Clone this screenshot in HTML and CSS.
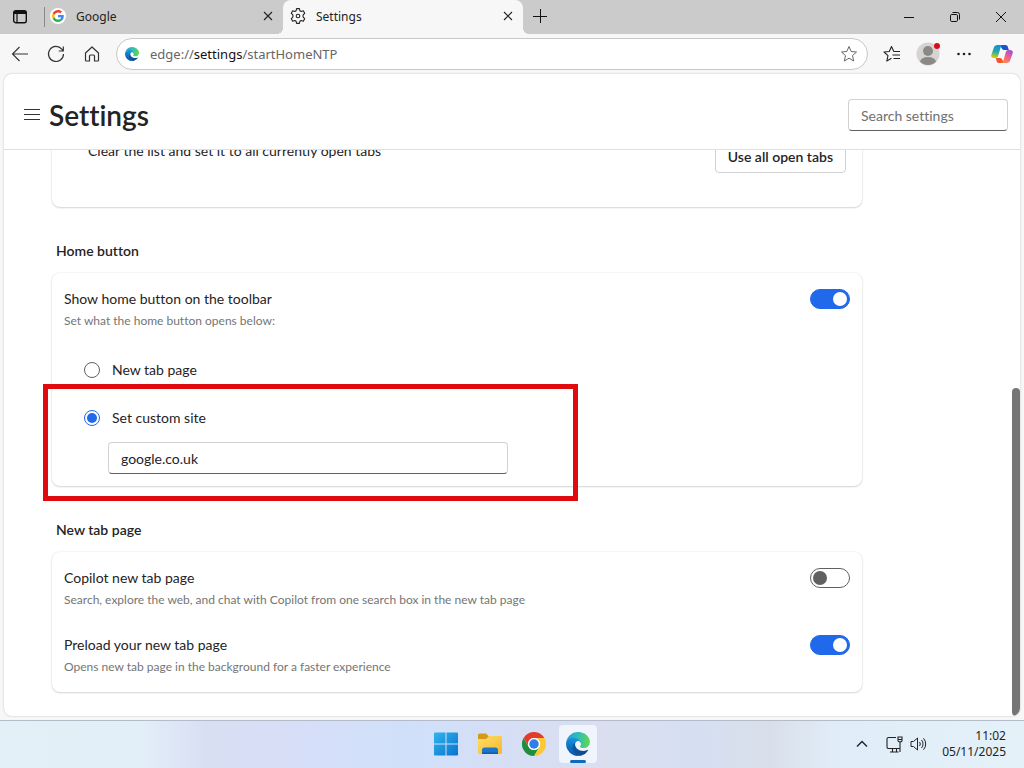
FILE: index.html
```html
<!DOCTYPE html>
<html lang="en">
  <head>
    <meta charset="UTF-8" />
    <meta name="viewport" content="width=device-width, initial-scale=1.0" />
    <title>Settings</title>
    <link rel="stylesheet" href="styles.css" />
  </head>
  <body>
    <svg class="defs" width="0" height="0" aria-hidden="true">
      <defs>
        <linearGradient id="edgeA" x1="0.2" y1="0" x2="1" y2="0.3">
          <stop offset="0" stop-color="#0c59a4" />
          <stop offset="1" stop-color="#114a8b" />
        </linearGradient>
        <linearGradient id="edgeB" x1="0.6" y1="0" x2="0.3" y2="1">
          <stop offset="0" stop-color="#1b9de2" />
          <stop offset="0.5" stop-color="#0f78c8" />
          <stop offset="1" stop-color="#0b559e" />
        </linearGradient>
        <linearGradient id="edgeC" x1="0" y1="0.4" x2="1" y2="0.5">
          <stop offset="0" stop-color="#1f9fd8" />
          <stop offset="0.5" stop-color="#30bfb4" />
          <stop offset="1" stop-color="#62d84e" />
        </linearGradient>
        <linearGradient id="winBlue" x1="0" y1="0" x2="1" y2="1">
          <stop offset="0" stop-color="#2fb5ee" />
          <stop offset="1" stop-color="#0873cd" />
        </linearGradient>
        <linearGradient id="folderFront" x1="0" y1="0" x2="1" y2="1">
          <stop offset="0" stop-color="#ffdc6b" />
          <stop offset="1" stop-color="#f5b92b" />
        </linearGradient>
        <linearGradient id="copilotA" x1="0.5" y1="0" x2="0.3" y2="1">
          <stop offset="0" stop-color="#0c8fe0" />
          <stop offset="0.5" stop-color="#26a8a8" />
          <stop offset="0.8" stop-color="#8cc63f" />
          <stop offset="1" stop-color="#f4c20d" />
        </linearGradient>
        <linearGradient id="copilotB" x1="0.8" y1="0" x2="0.3" y2="1">
          <stop offset="0" stop-color="#a04be0" />
          <stop offset="0.5" stop-color="#ee5d92" />
          <stop offset="1" stop-color="#fb8a4a" />
        </linearGradient>
      </defs>
      <symbol id="edge" viewBox="4 4 257 257">
        <path fill="url(#edgeA)" d="M235.68 195.46a93.73 93.73 0 0 1-10.54 4.71 101.87 101.87 0 0 1-35.9 6.46c-47.32 0-88.54-32.55-88.54-74.32A31.48 31.48 0 0 1 117.13 105c-42.8 1.8-53.8 46.4-53.8 72.53 0 73.88 68.09 81.37 82.76 81.37 7.91 0 19.84-2.3 27-4.56l1.31-.44a128.34 128.34 0 0 0 66.6-52.8 4 4 0 0 0-5.32-5.64z" />
        <path fill="url(#edgeB)" d="M110.34 246.34A79.2 79.2 0 0 1 87.6 225a80.72 80.72 0 0 1 29.53-120c3.12-1.47 8.45-4.13 15.54-4a32.35 32.35 0 0 1 25.69 13 31.88 31.88 0 0 1 6.36 18.66c0-.21 24.46-79.6-80-79.6-43.9 0-80 41.66-80 78.21a130.15 130.15 0 0 0 12.11 56 128 128 0 0 0 156.38 67.11 75.55 75.55 0 0 1-62.78-8z" />
        <path fill="url(#edgeC)" d="M156.94 153.78c-.81 1.05-3.3 2.5-3.3 5.66 0 2.61 1.7 5.12 4.72 7.23 14.38 10 41.49 8.68 41.56 8.68a59.56 59.56 0 0 0 30.27-8.35A61.38 61.38 0 0 0 260.63 114.2c.26-22.41-8-37.31-11.34-43.91C228.1 28.79 182.3 4.86 132.61 4.86a128 128 0 0 0-128 126.2c.48-36.54 36.8-66.05 80-66.05 3.5 0 23.46.34 42 10.07 16.34 8.58 24.9 18.94 30.85 29.21 6.18 10.67 7.28 24.15 7.28 29.52s-2.74 13.33-7.8 19.97z" />
      </symbol>
    </svg>

    <div class="tab-strip">
      <button class="tab-actions" aria-label="Tab actions">
        <svg width="16" height="16" viewBox="0 0 16 16" fill="none" stroke="#111" stroke-width="1.4">
          <rect x="1.700" y="1.700" width="12.600" height="12" rx="2" />
          <path d="M2 3.500h12" stroke-width="3" />
          <path d="M5 5v9" stroke-width="1.200" />
        </svg>
      </button>
      <div class="tab tab-first">
        <span class="favicon">
          <svg width="12" height="12" viewBox="0 0 48 48">
            <path fill="#ea4335" d="M24 9.5c3.54 0 6.71 1.22 9.21 3.6l6.85-6.85C35.9 2.38 30.47 0 24 0 14.62 0 6.51 5.38 2.56 13.22l7.98 6.19C12.43 13.72 17.74 9.5 24 9.5z" />
            <path fill="#4285f4" d="M46.98 24.55c0-1.57-.15-3.09-.38-4.55H24v9.02h12.94c-.58 2.96-2.26 5.48-4.78 7.18l7.73 6c4.51-4.18 7.09-10.36 7.09-17.65z" />
            <path fill="#fbbc05" d="M10.53 28.59c-.48-1.45-.76-2.99-.76-4.59s.27-3.14.76-4.59l-7.98-6.19C.92 16.46 0 20.12 0 24c0 3.88.92 7.54 2.56 10.78l7.97-6.19z" />
            <path fill="#34a853" d="M24 48c6.48 0 11.93-2.13 15.89-5.81l-7.73-6c-2.15 1.45-4.92 2.3-8.16 2.3-6.26 0-11.57-4.22-13.47-9.91l-7.98 6.19C6.51 42.62 14.62 48 24 48z" />
          </svg>
        </span>
        <span class="tab-title">Google</span>
        <button class="tab-close" aria-label="Close tab">
          <svg width="10" height="10" viewBox="0 0 10 10" stroke="#222" stroke-width="1.1"><path d="M1 1l8 8M9 1l-8 8" /></svg>
        </button>
      </div>
      <div class="tab tab-active">
        <svg class="gear" width="16" height="16" viewBox="0 0 16 16" fill="none" stroke="#222" stroke-width="1.100" stroke-linejoin="round">
          <path d="M6.600.600h2.800l.5 2.100 1.300.8 2.100-.7 1.400 2.500L13.100 6.900v2.200l1.600 1.600-1.400 2.500-2.100-.7-1.300.8-.5 2.100H6.600l-.5-2.100-1.300-.8-2.100.7-1.400-2.500L2.900 9.100V6.900L1.300 5.300l1.400-2.500 2.100.7 1.300-.8z" />
          <circle cx="8" cy="8" r="1.800" />
        </svg>
        <span class="tab-title">Settings</span>
        <button class="tab-close" aria-label="Close tab">
          <svg width="10" height="10" viewBox="0 0 10 10" stroke="#222" stroke-width="1.1"><path d="M1 1l8 8M9 1l-8 8" /></svg>
        </button>
      </div>
      <button class="new-tab" aria-label="New tab">
        <svg width="14" height="14" viewBox="0 0 14 14" stroke="#111"><path d="M0 7.500h14M7.500 0v14" /></svg>
      </button>
      <div class="window-controls">
        <button aria-label="Minimise">
          <svg width="10" height="10" viewBox="0 0 10 10" stroke="#111"><path d="M0 5.500h10" /></svg>
        </button>
        <button aria-label="Restore">
          <svg width="10" height="10" viewBox="0 0 10 10" fill="none" stroke="#111">
            <rect x="0.500" y="2.500" width="7" height="7" rx="1.300" />
            <path d="M2.500.5H7.500a2 2 0 0 1 2 2V7.500" />
          </svg>
        </button>
        <button aria-label="Close">
          <svg width="10" height="10" viewBox="0 0 10 10" stroke="#111"><path d="M0 0l10 10M10 0L0 10" /></svg>
        </button>
      </div>
    </div>

    <div class="toolbar">
      <button class="tool" aria-label="Back">
        <svg width="18" height="16" viewBox="0 0 18 16" fill="none" stroke="#333" stroke-width="1.100"><path d="M17 8H1.500M8.500 1L1.500 8l7 7" /></svg>
      </button>
      <button class="tool" aria-label="Refresh">
        <svg width="18" height="18" viewBox="0 0 18 18" fill="none" stroke="#333" stroke-width="1.200"><path d="M16.500 9A7.500 7.500 0 1 1 14.800 4.200L16 5.800M16.300 1.500V6h-4.500" /></svg>
      </button>
      <button class="tool" aria-label="Home">
        <svg width="16" height="16" viewBox="0 0 16 16" fill="none" stroke="#333" stroke-width="1.200" stroke-linejoin="round"><path d="M1.500 7L8 1l6.500 6v7.200a.8.8 0 0 1-.8.800H10.500V10a1 1 0 0 0-1-1h-3a1 1 0 0 0-1 1v5H2.300a.8.8 0 0 1-.8-.8z" /></svg>
      </button>
      <div class="address-bar">
        <svg width="14" height="14"><use href="#edge" /></svg>
        <span class="url">edge://<b>settings</b>/startHomeNTP</span>
        <button aria-label="Add this page to favourites">
          <svg width="18" height="18" viewBox="0 0 18 18" fill="none" stroke="#666" stroke-linejoin="round"><path d="M9 1.500l2.200 5 5.300.5-4 3.600 1.200 5.400L9 13.200 4.300 16l1.200-5.400-4-3.600 5.300-.5z" /></svg>
        </button>
      </div>
      <button class="tool" aria-label="Favourites">
        <svg width="18" height="18" viewBox="0 0 18 18" fill="none" stroke="#222" stroke-width="1.100" stroke-linejoin="round">
          <path d="M10.800 6.500L8.500 1.500l-2.200 5L1 7l4 3.600L3.800 16 8.500 13.200M10.500 6.500H17M9.500 10H17M10.500 13.500H17" />
        </svg>
      </button>
      <button class="tool" aria-label="Profile">
        <svg width="24" height="24" viewBox="0 0 24 24">
          <clipPath id="face"><circle cx="12" cy="12" r="11" /></clipPath>
          <circle cx="12" cy="12" r="11.500" fill="#d6d4d1" />
          <circle cx="12" cy="9" r="5" fill="#8b8986" />
          <ellipse cx="12" cy="20" rx="8" ry="5" fill="#8b8986" clip-path="url(#face)" />
          <circle cx="21" cy="4" r="3" fill="#d90d1e" />
        </svg>
      </button>
      <button class="tool" aria-label="Settings and more">
        <svg width="14" height="4" viewBox="0 0 14 4" fill="#222"><circle cx="1.500" cy="2" r="1.300" /><circle cx="7" cy="2" r="1.300" /><circle cx="12.500" cy="2" r="1.300" /></svg>
      </button>
      <button class="tool copilot" aria-label="Copilot">
        <svg width="22" height="20" viewBox="0 0 22 22" preserveAspectRatio="none">
          <path fill="#1b55c4" d="M8 1h6.500c1.200 0 2 .8 2.300 2l1 3.500H13c-1.500 0-2-1-2.300-2z" />
          <path fill="url(#copilotA)" d="M6.500 1H12c-1.300.3-2 1.300-2.400 2.800L7.200 13c-.4 1.600-1.200 2.500-2.700 2.500H3C.8 15.500-.2 14 .3 12L2.800 4C3.500 2 4.500 1 6.500 1z" />
          <path fill="#f0552e" d="M14 21H8c-1.200 0-2-.7-2.300-2l-1-3.500H9c1.500 0 2 1 2.300 2z" />
          <path fill="url(#copilotB)" d="M15.500 21H10c1.300-.3 2-1.300 2.400-2.800L14.800 9c.4-1.600 1.200-2.500 2.700-2.500H19c2.200 0 3.200 1.500 2.700 3.500L19.200 18c-.7 2-1.700 3-3.700 3z" />
        </svg>
      </button>
    </div>

    <div class="page">
      <header class="page-header">
        <button class="menu" aria-label="Settings menu">
          <svg width="16" height="12" viewBox="0 0 16 12" stroke="#333"><path d="M0 .5h16M0 5.500h16M0 10.500h16" /></svg>
        </button>
        <h1>Settings</h1>
        <input class="field search" type="text" placeholder="Search settings" aria-label="Search settings" />
      </header>

      <div class="scroll-area">
        <main>
          <section class="card startup-card">
            <div class="row">
              <p>Clear the list and set it to all currently open tabs</p>
              <button class="outline-button">Use all open tabs</button>
            </div>
          </section>

          <h2>Home button</h2>
          <section class="card">
            <div class="row">
              <div>
                <label for="showHome">Show home button on the toolbar</label>
                <p class="hint">Set what the home button opens below:</p>
              </div>
              <input class="switch" type="checkbox" id="showHome" checked />
            </div>
            <div class="choices">
              <div class="choice">
                <input type="radio" name="home" id="homeNewTab" />
                <label for="homeNewTab">New tab page</label>
              </div>
              <div class="custom-site">
                <div class="choice">
                  <input type="radio" name="home" id="homeCustom" checked />
                  <label for="homeCustom">Set custom site</label>
                </div>
                <input class="field site" type="text" value="google.co.uk" aria-label="Custom site" />
                <div class="highlight"></div>
              </div>
            </div>
          </section>

          <h2>New tab page</h2>
          <section class="card ntp-card">
            <div class="row">
              <div>
                <label for="copilotTab">Copilot new tab page</label>
                <p class="hint">Search, explore the web, and chat with Copilot from one search box in the new tab page</p>
              </div>
              <input class="switch" type="checkbox" id="copilotTab" />
            </div>
            <div class="row">
              <div>
                <label for="preload">Preload your new tab page</label>
                <p class="hint">Opens new tab page in the background for a faster experience</p>
              </div>
              <input class="switch" type="checkbox" id="preload" checked />
            </div>
          </section>
        </main>
        <div class="scrollbar"><div class="thumb"></div></div>
      </div>
    </div>

    <footer class="taskbar">
      <div class="apps">
        <button aria-label="Start">
          <svg width="24" height="24" viewBox="0 0 24 24" fill="url(#winBlue)"><path d="M0 1.500A1 1 0 0 1 1 .5h10.500v11H0zM12.500.5H23a1 1 0 0 1 1 1v10H12.500zM0 12.500h11.500v11H1a1 1 0 0 1-1-1zM12.500 12.500H24v10a1 1 0 0 1-1 1H12.500z" /></svg>
        </button>
        <button aria-label="File Explorer">
          <svg width="26" height="24" viewBox="0 0 26 24">
            <path fill="#d69a16" d="M1 3a1.500 1.500 0 0 1 1.500-1.500H9l3 3V9H1z" />
            <path fill="url(#folderFront)" d="M1 7h8l3-3h11.500A1.500 1.500 0 0 1 25 5.500v15a1.500 1.500 0 0 1-1.500 1.500h-21A1.500 1.500 0 0 1 1 20.500z" />
            <path fill="#1976c9" d="M5 22v-4.500A2.500 2.500 0 0 1 7.500 15.500h11a2.500 2.500 0 0 1 2.500 2.500V22z" />
            <path fill="#135ba3" d="M5 20.500h16V22H5z" />
          </svg>
        </button>
        <button aria-label="Chrome">
          <svg width="24" height="24" viewBox="0 0 48 48">
            <circle cx="24" cy="24" r="23" fill="#fff" />
            <path fill="#e33b2e" d="M3.200 12A24 24 0 0 1 44.800 12H24a12 12 0 0 0-10.400 18z" />
            <path fill="#fcc934" d="M44.800 12A24 24 0 0 1 24 48l10.400-18A12 12 0 0 0 24 12z" />
            <path fill="#1e8e3e" d="M24 48A24 24 0 0 1 3.200 12l10.400 18A12 12 0 0 0 34.400 30z" />
            <circle cx="24" cy="24" r="12" fill="#fff" />
            <circle cx="24" cy="24" r="9.500" fill="#2f7de9" />
          </svg>
        </button>
        <button class="running" aria-label="Edge">
          <svg width="24" height="24"><use href="#edge" /></svg>
        </button>
      </div>
      <div class="tray">
        <svg width="12" height="8" viewBox="0 0 12 8" fill="none" stroke="#222" stroke-width="1.400"><path d="M1 6.500l5-5 5 5" /></svg>
        <div class="status">
          <svg width="17" height="17" viewBox="0 0 17 17" fill="none" stroke="#222" stroke-width="1.100">
            <path d="M10 1.500H2.500a1.500 1.500 0 0 0-1.500 1.500v8a1.500 1.500 0 0 0 1.500 1.500h11M4 16h8.500M6.500 12.500V16M10.500 12.500V16M12 1h4v3.500a1.200 1.200 0 0 1-1.200 1.200h-1.600A1.200 1.200 0 0 1 12 4.500zM12 3.500h4M14 5.700V16" />
          </svg>
          <svg width="17" height="16" viewBox="0 0 17 16" fill="none" stroke="#222" stroke-linejoin="round">
            <path d="M1 5.500h2.500L7.500 2v12l-4-3.500H1zM9.500 6a3 3 0 0 1 0 4M11.500 4a6 6 0 0 1 0 8M13.500 2.300a8.500 8.500 0 0 1 0 11.400" />
          </svg>
        </div>
        <div class="clock">11:02<br />05/11/2025</div>
      </div>
    </footer>
  </body>
</html>
```
FILE: styles.css
```css
* {
  box-sizing: border-box;
}
body {
  margin: 0;
  height: 100vh;
  display: flex;
  flex-direction: column;
  background: #f7f7f7;
  color: #242424;
  font-family: "Noto Sans", sans-serif;
  font-size: 12px;
  overflow: hidden;
}
button {
  display: flex;
  align-items: center;
  justify-content: center;
  padding: 0;
  border: none;
  background: none;
  font: inherit;
  color: inherit;
}
svg {
  display: block;
  flex: none;
}
p,
h1,
h2 {
  margin: 0;
}
.defs {
  position: absolute;
}

/* tabs */
.tab-strip {
  display: flex;
  height: 34px;
  background: #cbcbcb;
}
.tab-actions {
  width: 40px;
}
.tab {
  display: flex;
  align-items: center;
  width: 240px;
  padding: 0 10px 2px 7px;
}
.tab-first {
  margin-left: 3px;
  position: relative;
}
.tab-first::before {
  content: "";
  position: absolute;
  left: 1px;
  top: 7px;
  width: 1px;
  height: 20px;
  background: #8a8a8a;
}
.favicon {
  display: flex;
  align-items: center;
  justify-content: center;
  width: 16px;
  height: 16px;
  border-radius: 8px;
  background: #fff;
}
.tab-title {
  flex: 1;
  margin-left: 10px;
}
.tab-active {
  position: relative;
  background: #f7f7f7;
  border-radius: 8px 8px 0 0;
}
.tab-active::before,
.tab-active::after {
  content: "";
  position: absolute;
  bottom: 0;
  width: 6px;
  height: 6px;
}
.tab-active::before {
  right: 100%;
  background: radial-gradient(circle at 0 0, transparent 6px, #f7f7f7 6px);
}
.tab-active::after {
  left: 100%;
  background: radial-gradient(circle at 100% 0, transparent 6px, #f7f7f7 6px);
}
.new-tab {
  width: 34px;
  padding-bottom: 2px;
}
.window-controls {
  display: flex;
  margin-left: auto;
}
.window-controls button {
  width: 46px;
}

/* toolbar */
.toolbar {
  display: flex;
  align-items: center;
  height: 40px;
  padding: 0 4px 0 2px;
}
.tool {
  width: 36px;
  height: 32px;
}
.copilot {
  margin-left: 2px;
}
.address-bar {
  flex: 1;
  display: flex;
  align-items: center;
  height: 32px;
  margin: 0 6px;
  padding: 0 9px 0 8px;
  border: 1px solid #c8c8c8;
  border-radius: 16px;
  background: #fff;
}
.url {
  flex: 1;
  margin-left: 11px;
  font-size: 13px;
  color: #666;
}
.url b {
  font-weight: 400;
  color: #111;
}

/* settings page */
.page {
  flex: 1;
  min-height: 0;
  display: flex;
  flex-direction: column;
  margin: 0 4px 4px;
  border-radius: 8px;
  background: #fff;
  box-shadow: 0 0 2px #bbb;
  font-family: Lato, sans-serif;
  font-size: 14px;
  font-variant-ligatures: none;
  line-height: 20px;
  overflow: hidden;
}
.page-header {
  display: flex;
  align-items: center;
  padding: 23px 12px 16px 20px;
  border-bottom: 1px solid #e0e0e0;
}
h1 {
  flex: 1;
  margin-left: 9px;
  font-size: 28px;
  font-weight: 600;
  line-height: 36px;
}
.field {
  height: 32px;
  padding: 0 12px;
  border: 1px solid #d1d1d1;
  border-bottom-color: #616161;
  border-radius: 4px;
  background: #fff;
  font: inherit;
  color: #242424;
}
.search {
  width: 160px;
}
.search::placeholder {
  color: #707070;
}
.scroll-area {
  flex: 1;
  min-height: 0;
  display: flex;
  overflow: hidden;
}
main {
  flex: 1;
  display: flex;
  flex-direction: column;
  justify-content: flex-end;
  padding: 0 150px 24px 48px;
}
.card {
  flex: none;
  padding: 16px 12px 12px;
  border-radius: 8px;
  background: #fff;
  box-shadow: 0 0 2px rgba(0, 0, 0, 0.12), 0 1px 2px rgba(0, 0, 0, 0.14);
}
.startup-card {
  padding: 16px 16px 34px 36px;
}
h2 {
  margin: 34px 4px 12px;
  font-size: 14px;
  font-weight: 600;
  line-height: 20px;
}
.row {
  display: flex;
  justify-content: space-between;
}
.hint {
  margin-top: 4px;
  font-size: 12px;
  line-height: 16px;
  color: #757575;
}
.outline-button {
  height: 32px;
  padding: 0 12px;
  border: 1px solid #d1d1d1;
  border-radius: 4px;
  font-weight: 600;
}
.switch {
  appearance: none;
  width: 40px;
  height: 20px;
  margin: 0;
  padding: 2px;
  border: 1px solid #616161;
  border-radius: 10px;
}
.switch::before {
  content: "";
  display: block;
  width: 14px;
  height: 14px;
  border-radius: 50%;
  background: #616161;
}
.switch:checked {
  border-color: #2169eb;
  background: #2169eb;
}
.switch:checked::before {
  margin-left: auto;
  background: #fff;
}
.choices {
  padding: 31px 0 0 20px;
}
.choice {
  display: flex;
  align-items: center;
  gap: 12px;
}
.choice input {
  appearance: none;
  width: 16px;
  height: 16px;
  margin: 0;
  border: 1px solid #616161;
  border-radius: 50%;
}
.choice input:checked {
  padding: 2px;
  border-color: #2169eb;
  background: #2169eb content-box;
}
.custom-site {
  position: relative;
  margin-top: 28px;
}
.site {
  display: block;
  width: 100%;
  max-width: 400px;
  margin: 14px 0 0 24px;
}
.highlight {
  position: absolute;
  top: -24px;
  bottom: -27px;
  left: -41px;
  width: 535px;
  border: 5px solid #e00b0f;
  pointer-events: none;
}
.ntp-card {
  display: flex;
  flex-direction: column;
  gap: 27px;
  padding-bottom: 17px;
}
.scrollbar {
  display: flex;
  flex-direction: column;
  justify-content: flex-end;
  width: 8px;
}
.thumb {
  height: 58%;
  border-radius: 4px;
  background: #757575;
}

/* taskbar */
.taskbar {
  display: grid;
  grid-template-columns: 1fr auto 1fr;
  align-items: center;
  height: 48px;
  padding-bottom: 1px;
  border-top: 1px solid #b4bccb;
  background: linear-gradient(90deg, #e3f0f7 0, #e2eef8 14%, #d9dff3 20%, #d6def8 30%, #d0e0fa 40%, #d6def5 50%, #dadfef 60%, #d5dff2 68%, #d9dfea 75%, #e0edf8 82%, #e5f1f8 100%);
}
.apps {
  grid-column: 2;
  display: flex;
  gap: 6px;
}
.apps button {
  position: relative;
  width: 38px;
  height: 38px;
}
.apps .running {
  border-radius: 4px;
  background: #f0f4fc;
}
.running::after {
  content: "";
  position: absolute;
  bottom: 0;
  left: 11px;
  width: 16px;
  height: 3px;
  border-radius: 2px;
  background: #0f6cbd;
}
.tray {
  display: flex;
  align-items: center;
  justify-content: flex-end;
  padding-right: 18px;
}
.status {
  display: flex;
  gap: 7px;
  margin: 0 15px 0 18px;
}
.clock {
  font-size: 12px;
  line-height: 16px;
  text-align: right;
}
```
